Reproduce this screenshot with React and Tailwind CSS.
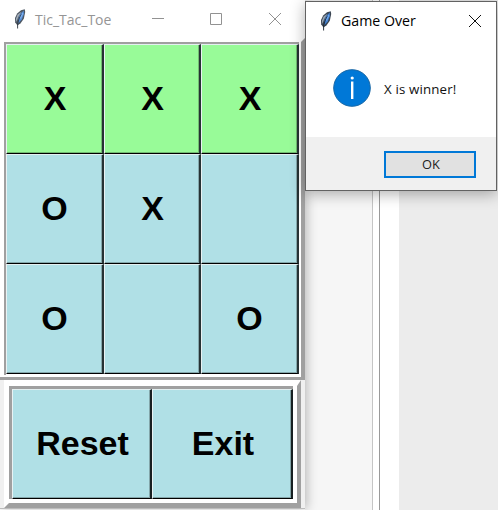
import React from 'react';

const cells = ['X', 'X', 'X', 'O', 'X', '', 'O', '', 'O'];

function Feather({ className }) {
  return (
    <svg className={className} width="12" height="20" viewBox="0 0 12 20">
      <path d="M10.8.2 11.2 3 9.8 9.8 6.6 14.2 3.5 16.4 1.2 13.5 1 9 3.2 4.4 7 1.2Z" fill="#3a4552" />
      <path d="M9.8 1.6 6 5 4 10.8 4 14.4 7.8 10.6 9.8 5.2Z" fill="#4381d0" />
      <path d="M7.4 2.7 3.6 5.5 1.9 9.8 2.4 13 4.2 8.2Z" fill="#98a3af" />
      <path d="M7.6 4.8 4.9 10 3.6 15.5V19.5" fill="none" stroke="#17202b" strokeWidth=".9" />
      <path d="M8.9 4 6.4 9.5" stroke="#73aaf0" strokeWidth="1.2" />
    </svg>
  );
}

function Cell({ value, win }) {
  return (
    <div
      className={
        'flex items-center justify-center border-t border-l border-r-2 border-b border-t-[#e4f0f1] border-l-[#e9f2f3] border-r-[#263234] border-b-black pb-[2px] shadow-[inset_-1px_-1px_0_#00000040] ' +
        (win ? 'bg-[#98fb98]' : 'bg-[#b0e0e6]')
      }
    >
      <span className={value === 'X' ? 'pl-[1px] text-[34px] leading-none' : 'text-[34px] leading-none'}>{value}</span>
    </div>
  );
}

function ControlButton({ label }) {
  return (
    <div className="flex items-center justify-center border-t border-l border-r-2 border-b border-t-[#e4f0f1] border-l-[#e9f2f3] border-r-[#182022] border-b-black bg-[#b0e0e6] pb-[3px] pl-[2px] text-[34px] leading-none shadow-[inset_-1px_-1px_0_#83a5a9]">
      {label}
    </div>
  );
}

export default function App() {
  return (
    <div className="relative flex h-[510px] w-[498px] overflow-hidden bg-white font-['Liberation_Sans',sans-serif]">
      <main className="z-10 flex h-[509px] w-[305px] shrink-0 flex-col border-b border-[#bcbcbc] bg-[#f0f0f0] shadow-[2px_0_10px_#00000040]">
        <header className="flex h-[38px] shrink-0 items-center bg-white">
          <Feather className="ml-[14px] shrink-0 opacity-90" />
          <h1 className="ml-[9px] w-[117px] font-['Open_Sans',sans-serif] text-[14px] font-normal text-[#959595]">Tic_Tac_Toe</h1>
          <svg width="132" height="14" viewBox="0 0 132 14" fill="none" stroke="#929292">
            <path d="M0 6.5h12M58.5 1.5h11v11h-11zM117 1l12 12M129 1l-12 12" />
          </svg>
        </header>
        <section className="flex h-[342px] shrink-0 bg-white">
          <div className="flex h-full w-[301px] flex-col border-b-[3px] border-[#a0a0a0]">
            <div className="ml-1 h-[339px] w-[297px] pt-[4px] pr-[2px]">
              <div className="grid h-[333px] w-[295px] grid-cols-[98px_97px_98px] grid-rows-[110px_110px_110px] border-t-2 border-l-2 border-[#a0a0a0] font-bold">
                {cells.map((value, i) => (
                  <Cell key={i} value={value} win={i < 3} />
                ))}
              </div>
            </div>
          </div>
          <div className="h-full w-1 bg-[#a0a0a0] [clip-path:polygon(0_4px,100%_0,100%_100%,0_100%)]" />
        </section>
        <section className="ml-1 h-[128px] w-[297px] shrink-0 border-t-[6px] border-r-4 border-b-[5px] border-l-[5px] border-t-white border-r-[#a0a0a0] border-b-[#a0a0a0] border-l-white bg-white">
          <div className="grid h-[113px] w-[284px] grid-cols-[140px_141px] grid-rows-[110px] border-t-[3px] border-l-[3px] border-[#a0a0a0] font-bold">
            <ControlButton label="Reset" />
            <ControlButton label="Exit" />
          </div>
        </section>
      </main>
      <div className="w-[68px] border-r border-[#c5c5c5] bg-[#f6f6f6]" />
      <div className="w-[7px] border-r border-[#999] bg-white" />
      <div className="w-[19px] bg-white" />
      <div className="flex-1 bg-[#ececec]" />

      <aside className="absolute top-[1px] left-[305px] z-20 flex h-[190px] w-[192px] flex-col border border-[#626262] bg-white shadow-[0_3px_14px_#00000050]">
        <header className="flex h-[37px] shrink-0 items-center">
          <Feather className="ml-[14px] shrink-0" />
          <h2 className="ml-[9px] w-[127px] font-['Open_Sans',sans-serif] text-[14.2px] font-normal text-black">Game Over</h2>
          <svg width="14" height="14" viewBox="0 0 14 14" fill="none" stroke="#111">
            <path d="m1 1 12 12M13 1 1 13" />
          </svg>
        </header>
        <div className="flex h-[98px] items-center pl-[27px]">
          <svg width="38" height="38" viewBox="0 0 38 38">
            <circle cx="19" cy="19" r="18.3" fill="#0078d7" stroke="#1767a6" />
            <path d="M18 12.5h2.4V30H18z" fill="white" />
            <circle cx="19.2" cy="9" r="1.6" fill="white" />
          </svg>
          <p className="ml-[13px] pt-[4px] font-['Open_Sans',sans-serif] text-[13.3px] tracking-[0.15px] text-[#111]">X is winner!</p>
        </div>
        <footer className="flex flex-1 items-start justify-end bg-[#f0f0f0] pt-[14px] pr-[20px]">
          <button className="flex h-[27px] w-[92px] items-center justify-center border-2 border-[#0078d7] bg-[#e1e1e1] pt-[1px] pl-[2px] font-['Open_Sans',sans-serif] text-[12.8px] text-[#222]">OK</button>
        </footer>
      </aside>
    </div>
  );
}
